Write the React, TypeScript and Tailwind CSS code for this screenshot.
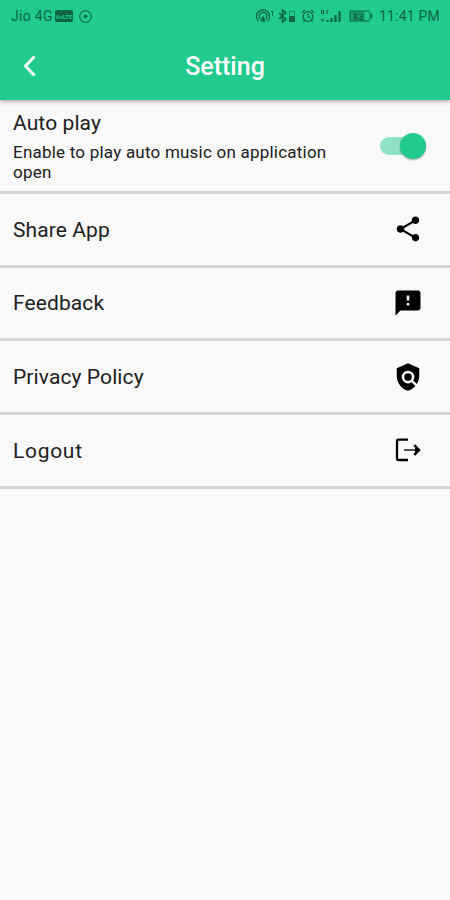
import { useState } from 'react';
import type { ReactNode } from 'react';
import { MdFeedback, MdPolicy, MdShare } from 'react-icons/md';

interface SettingRow {
  label: string;
  icon: ReactNode;
  tracking: string;
}

const LogoutIcon = () => (
  <svg className="w-[30px] h-[30px]" viewBox="0 0 30 30" fill="none" stroke="currentColor">
    <path d="M15 4.700H5.500Q4 4.700 4 6.200V23.500Q4 25 5.500 25H15" strokeWidth={2.3} />
    <path d="M11 15H25" strokeWidth={1.800} stroke="#444" />
    <path d="M21.300 10.200L26 15L21.300 19.800" strokeWidth={2.5} />
    <path d="M22 12L25.500 15L22 18Z" fill="currentColor" stroke="none" />
  </svg>
);

const rows: SettingRow[] = [
  { label: 'Share App', icon: <MdShare size={30} />, tracking: 'tracking-[0.1px]' },
  { label: 'Feedback', icon: <MdFeedback size={30} />, tracking: 'tracking-[0.1px]' },
  { label: 'Privacy Policy', icon: <MdPolicy size={30} />, tracking: 'tracking-[0.1px]' },
  { label: 'Logout', icon: <LogoutIcon />, tracking: 'tracking-[0.7px]' },
];

const StatusBar = () => (
  <div className="flex h-8 items-center justify-between pl-[11px] pr-[10px] text-[14px] text-[#0e6544]">
    <div className="flex items-center">
      <span className="w-11 whitespace-nowrap tracking-[0.3px]">Jio 4G</span>
      <span className="flex h-3 w-[18px] items-center justify-center rounded-[2px] bg-[#0e6544] text-[6px] font-bold text-[#21cb8e]">
        VoLTE
      </span>
      <svg className="ml-[6px] h-[13px] w-[13px]" viewBox="0 0 13 13" fill="none" stroke="currentColor">
        <circle cx="6.500" cy="6.500" r="5.800" strokeWidth={1.1} />
        <circle cx="6.500" cy="6.500" r="1.800" fill="currentColor" stroke="none" />
      </svg>
    </div>
    <div className="flex items-center">
      {/* Hotspot, bluetooth, alarm, signal, battery */}
      <svg className="h-6 w-[124px]" viewBox="0 0 124 24" fill="none" stroke="currentColor" strokeWidth={1.3}>
        <path d="M3.500 17A6.500 6.500 0 1 1 12.500 17M5.500 15A3.800 3.800 0 1 1 10.500 15" />
        <path d="M5.500 17.500L8 11.500L10.500 17.500Z" fill="currentColor" stroke="none" />
        <path d="M16 8L17.500 7V11.500" strokeWidth={1} />
        <path d="M24 9L31 15.500L27.500 18V6L31 8.500L24 15" strokeWidth={1.500} />
        <path d="M34.500 7.500H39.500V17.500H34.500Z" strokeWidth={0.8} opacity={0.7} />
        <path d="M34 12H40V18H34Z" fill="currentColor" stroke="none" />
        <circle cx="53" cy="12.500" r="4.800" />
        <path d="M53 9.500V12.500L55.500 14M47 8.500L50 6M56 6L59 8.500M49.500 16.500L48.500 18M56.500 16.500L57.500 18" />
        <path d="M66.500 6V9H69M68.500 6V10.500M72 6V10M66 15L67.500 17L69 15" strokeWidth={1.1} />
        <path d="M72.500 18V16M76.500 18V14M80.500 18V11M84.500 18V7" strokeWidth={2.300} />
        <path d="M95 7H113Q115 7 115 9V15Q115 17 113 17H95Z" strokeWidth={1} />
        <path d="M95 7H110V17H95Z" fill="currentColor" opacity={0.4} stroke="none" />
        <text x="98" y="15.500" fontSize="9" fontWeight="700" fill="currentColor" stroke="none">83</text>
        <path d="M116.500 10V14" strokeWidth={1.500} />
      </svg>
      <span className="w-[61px] whitespace-nowrap tracking-[0.2px]">11:41 PM</span>
    </div>
  </div>
);

export default function App() {
  const [autoPlay, setAutoPlay] = useState(true);

  return (
    <div className="min-h-screen w-full bg-[#fafafa] font-['Roboto',sans-serif] text-[#202020]">
      <header className="relative h-[100px] bg-[#21cb8e] shadow-[0_1px_5px_rgba(0,0,0,0.4)]">
        <StatusBar />
        <div className="grid h-[68px] grid-cols-[60px_1fr_60px] items-center text-white">
          <button aria-label="Back" className="flex justify-center">
            <svg className="h-6 w-6" viewBox="0 0 24 24" fill="none" stroke="currentColor" strokeWidth={3}>
              <path d="M16.500 2.500L7.500 12L16.500 21.500" />
            </svg>
          </button>
          <h1 className="pt-px text-center text-[25px] font-medium leading-8">Setting</h1>
        </div>
      </header>

      <main>
        <div className="flex h-[94px] items-center justify-between border-b-[3px] border-[#d6d6d6] pl-[13px] pr-6">
          <div className="pt-px">
            <div className="text-[21px] leading-6 tracking-[0.1px]">Auto play</div>
            <div className="mt-[7px] w-[335px] text-[17px] leading-5 tracking-[0.22px]">
              Enable to play auto music on application open
            </div>
          </div>
          <button
            role="switch"
            aria-checked={autoPlay}
            aria-label="Auto play"
            onClick={() => setAutoPlay(!autoPlay)}
            className={`flex h-[18px] w-[46px] items-center rounded-full ${
              autoPlay ? 'justify-end bg-[#8fe3c5]' : 'justify-start bg-gray-300'
            }`}
          >
            <span className="h-[26px] w-[26px] rounded-full bg-[#21cb8e] shadow-[0_1px_2px_rgba(0,0,0,0.35)]" />
          </button>
        </div>

        {rows.map((row) => (
          <button
            key={row.label}
            className="flex h-[73.7px] w-full items-center justify-between border-b-[3px] border-[#d6d6d6] pl-[13px] pr-[27px] text-left"
          >
            <span className={`pt-[2px] text-[21px] ${row.tracking}`}>{row.label}</span>
            <span className="text-black">{row.icon}</span>
          </button>
        ))}
      </main>
    </div>
  );
}
